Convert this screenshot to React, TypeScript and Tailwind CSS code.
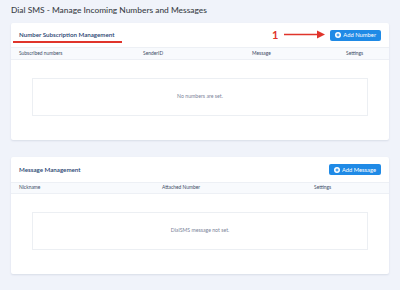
const font = { fontFamily: "Lato, 'Open Sans', sans-serif" };

const PlusCircle = () => (
  <svg width="6" height="6" viewBox="0 0 16 16" className="shrink-0">
    <circle cx="8" cy="8" r="8" fill="white" />
    <path d="M8 4v8M4 8h8" stroke="#1e88e5" strokeWidth="2.6" />
  </svg>
);

const AddButton = ({ label }: { label: string }) => (
  <button className="flex items-center gap-[2px] h-[11px] px-[5px] rounded-[2px] bg-[#1f8ae6] text-white text-[5.8px] leading-none">
    <PlusCircle />
    <span>{label}</span>
  </button>
);

const Card = ({
  title,
  button,
  cols,
  empty,
  headH,
  colH,
  underline,
}: {
  title: string;
  button: string;
  cols: { label: string; w: string }[];
  empty: string;
  headH: string;
  colH: string;
  underline?: boolean;
}) => (
  <div className="bg-white rounded-[2px] shadow-[0_1px_2px_rgba(40,60,100,0.12)]">
    <div className={`relative flex items-center justify-between pl-[8px] pr-[8px] ${headH}`}>
      <div className="text-[6.2px] text-[#24406e] font-semibold">{title}</div>
      {underline && (
        <div className="absolute left-[2px] top-[18px] w-[109px] h-[2px] bg-[#e0342b]" />
      )}
      <AddButton label={button} />
    </div>
    <div
      className={`flex items-center px-[8px] bg-[#f8fafd] border-y border-[#edf0f5] text-[4.9px] text-[#3c4b66] ${colH}`}
    >
      {cols.map((c) => (
        <div key={c.label} className={c.w}>
          {c.label}
        </div>
      ))}
    </div>
    <div className="px-[21px] pt-[18px] pb-[24px]">
      <div className="h-[38px] border border-[#eceff3] flex items-center justify-center text-[5.2px] text-[#7a8499]">
        {empty}
      </div>
    </div>
  </div>
);

export default function App() {
  return (
    <div className="relative w-[400px] h-[290px] bg-[#f0f3fa] px-[11px] overflow-hidden" style={font}>
      <div className="h-[23px] pt-[4px] text-[8.4px] text-[#3a3f47] leading-[12px] font-medium">
        Dial SMS - Manage Incoming Numbers and Messages
      </div>
      <Card
        title="Number Subscription Management"
        button="Add Number"
        underline
        headH="h-[24px]"
        colH="h-[13px]"
        cols={[
          { label: "Subscribed numbers", w: "w-[124px]" },
          { label: "SenderID", w: "w-[109px]" },
          { label: "Message", w: "w-[94px]" },
          { label: "Settings", w: "" },
        ]}
        empty="No numbers are set."
      />
      <div className="h-[17px]" />
      <Card
        title="Message Management"
        button="Add Message"
        headH="h-[25px]"
        colH="h-[12px]"
        cols={[
          { label: "Nickname", w: "w-[143px]" },
          { label: "Attached Number", w: "w-[152px]" },
          { label: "Settings", w: "" },
        ]}
        empty="DialSMS message not set."
      />
      <div className="absolute left-[272px] top-[27px] text-[11px] font-bold text-[#e0342b]">1</div>
      <svg className="absolute left-[284px] top-[30px]" width="42" height="9" viewBox="0 0 42 9">
        <path d="M0 4.5h34" stroke="#e0342b" strokeWidth="1.6" />
        <path d="M33 0.5L41 4.5L33 8.5Z" fill="#e0342b" />
      </svg>
    </div>
  );
}
